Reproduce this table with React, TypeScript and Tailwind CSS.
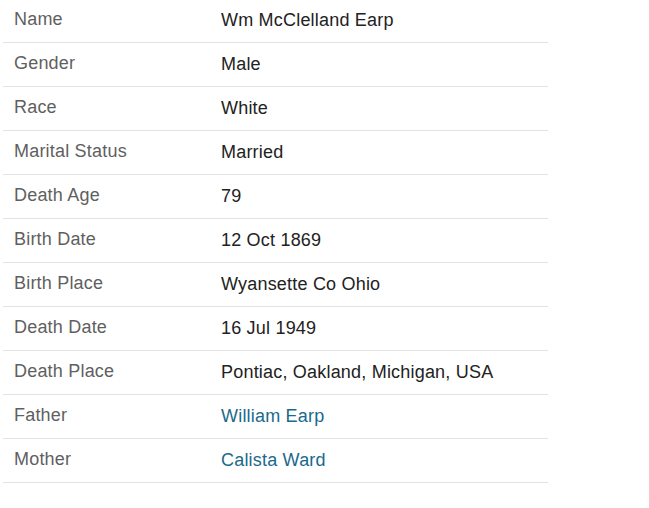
const rows: { label: string; value: string; link?: boolean }[] = [
  { label: 'Name', value: 'Wm McClelland Earp' },
  { label: 'Gender', value: 'Male' },
  { label: 'Race', value: 'White' },
  { label: 'Marital Status', value: 'Married' },
  { label: 'Death Age', value: '79' },
  { label: 'Birth Date', value: '12 Oct 1869' },
  { label: 'Birth Place', value: 'Wyansette Co Ohio' },
  { label: 'Death Date', value: '16 Jul 1949' },
  { label: 'Death Place', value: 'Pontiac, Oakland, Michigan, USA' },
  { label: 'Father', value: 'William Earp', link: true },
  { label: 'Mother', value: 'Calista Ward', link: true },
];

export default function App() {
  return (
    <div className="min-h-screen bg-white pl-[3px] font-['Liberation_Sans',Arial,sans-serif]">
      <div className="-mt-px w-[545px]">
        {rows.map((r) => (
          <div key={r.label} className="flex h-[44px] border-b border-[#e3e3e3] text-[18px] leading-[27px] tracking-[0.2px]">
            <div className="w-[218px] pl-[11px] pt-[7px] text-[#5f5f5f]">{r.label}</div>
            <div className={`pt-[8px] ${r.link ? 'text-[#1b6a8c]' : 'text-[#222]'}`}>
              {r.value}
            </div>
          </div>
        ))}
      </div>
    </div>
  );
}
